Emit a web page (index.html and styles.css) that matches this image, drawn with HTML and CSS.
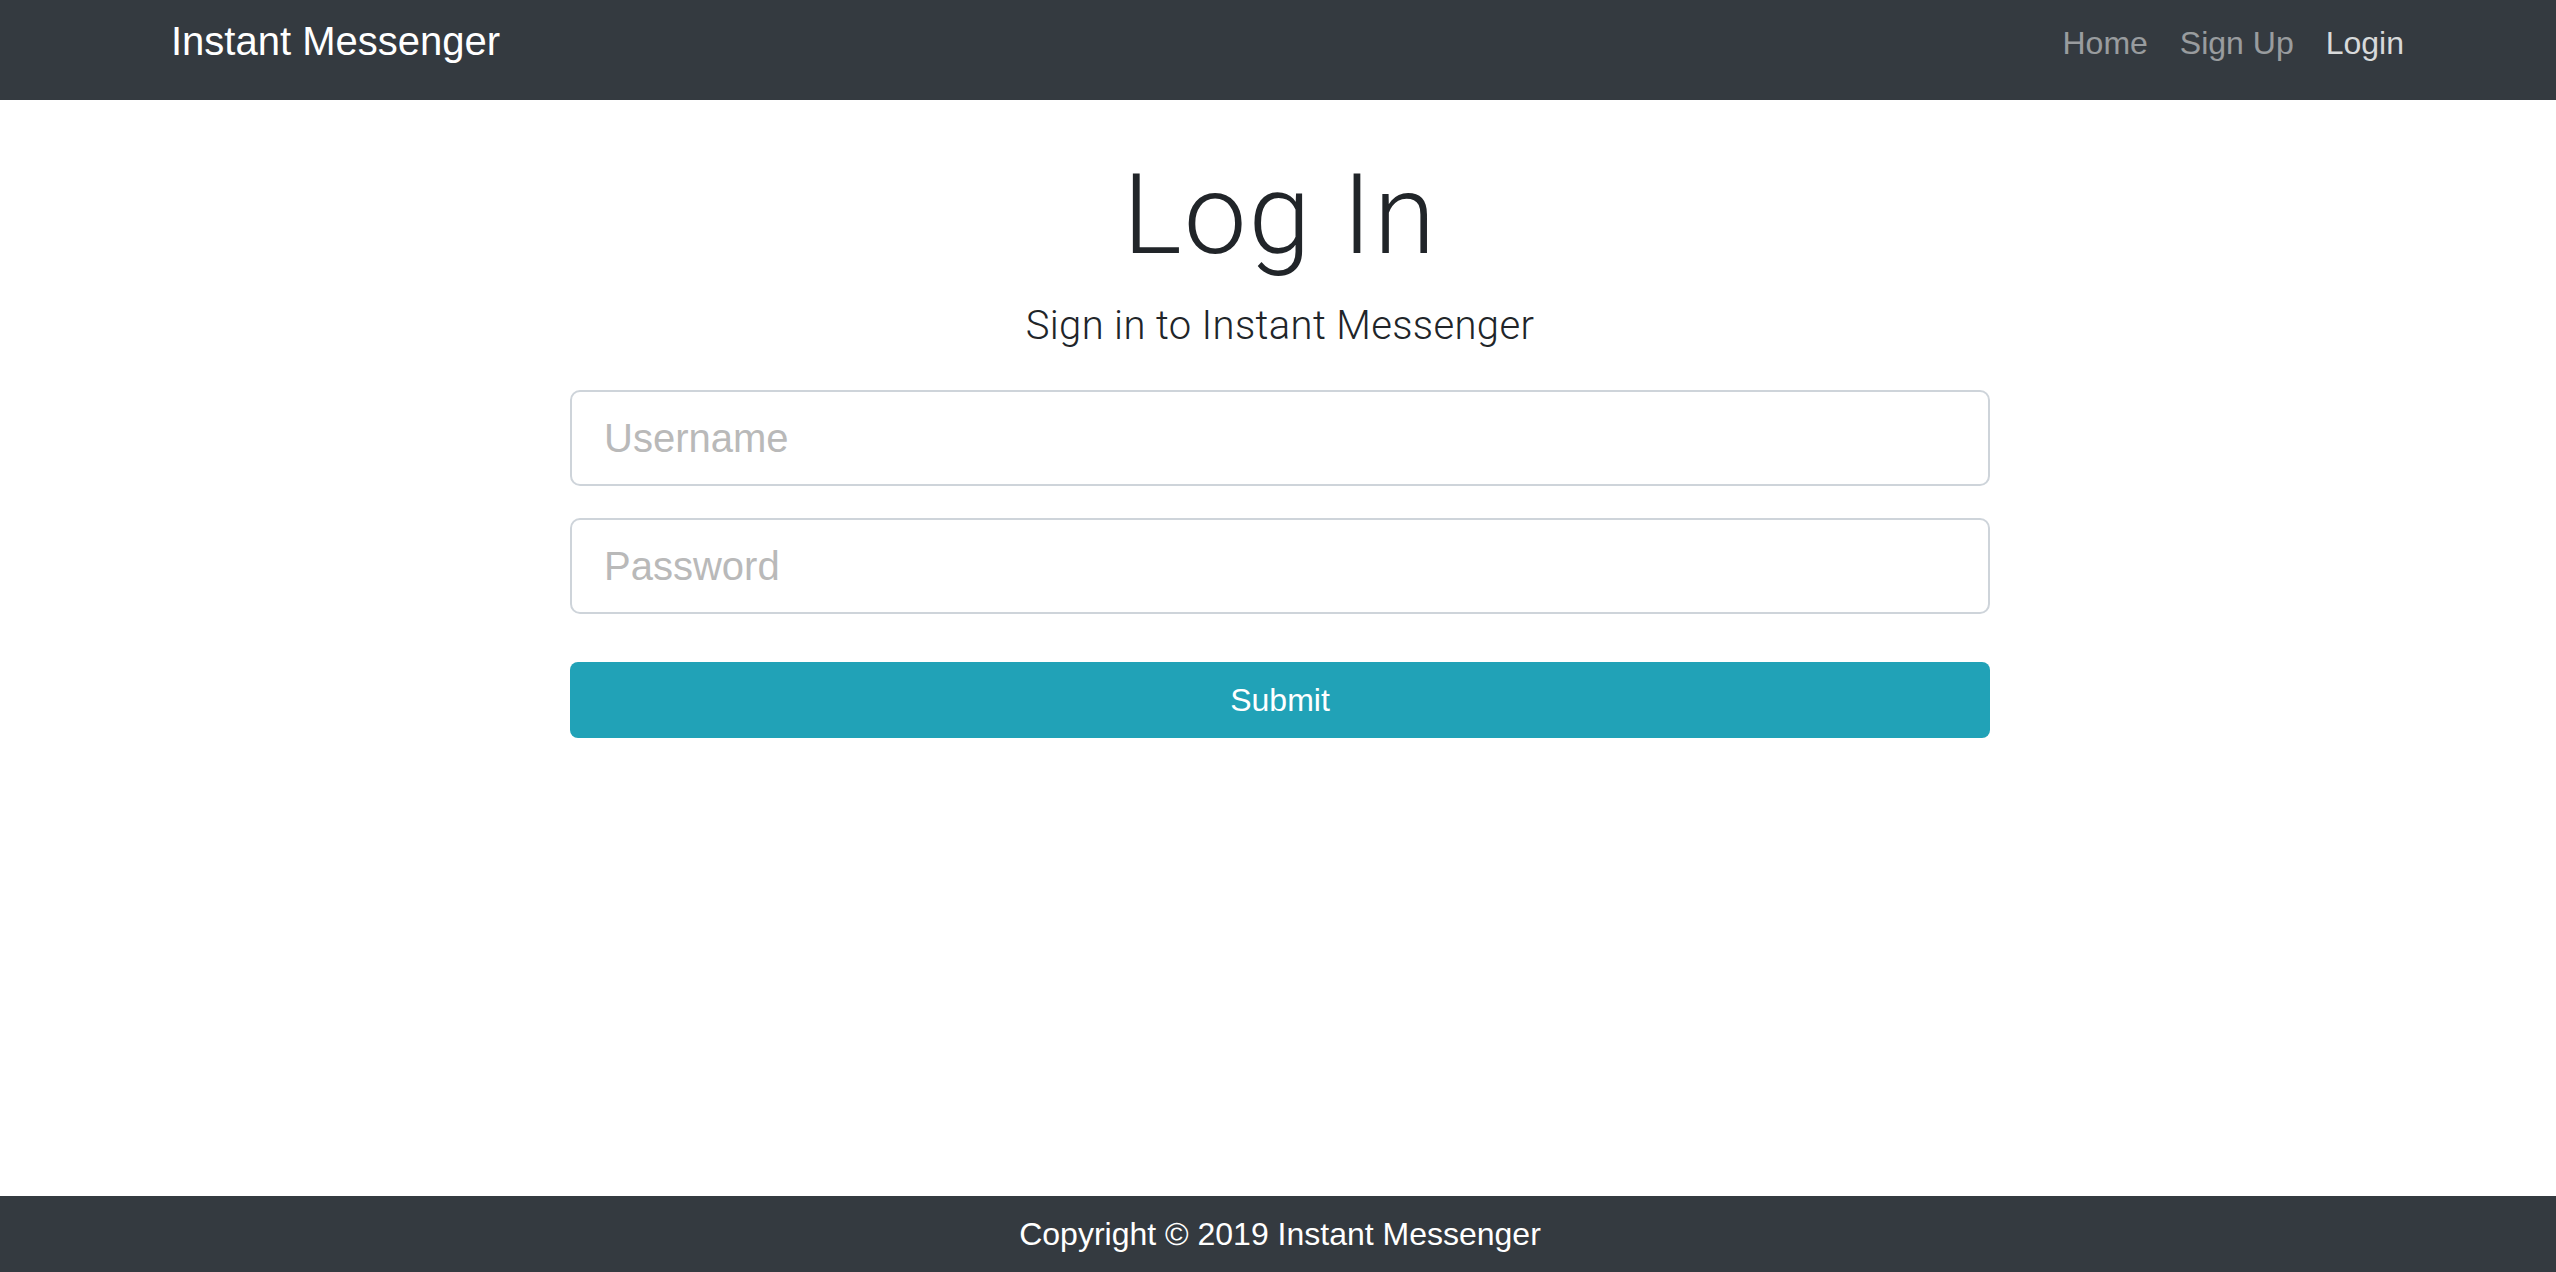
FILE: index.html
```html
<!DOCTYPE html>
<html lang="en">
<head>
<meta charset="utf-8">
<title>Log In - Instant Messenger</title>
<link rel="stylesheet" href="styles.css">
</head>
<body>
<header class="navbar">
  <div class="navbar-inner">
    <a class="brand" href="#">Instant Messenger</a>
    <nav class="nav">
      <a class="nav-link" href="#">Home</a>
      <a class="nav-link" href="#">Sign Up</a>
      <a class="nav-link active" href="#">Login</a>
    </nav>
  </div>
</header>
<main class="main">
  <h1 class="title">Log In</h1>
  <p class="lead">Sign in to Instant Messenger</p>
  <form class="login-form">
    <input class="field" type="text" placeholder="Username">
    <input class="field" type="password" placeholder="Password">
    <button class="submit" type="button">Submit</button>
  </form>
</main>
<footer class="footer">
  <p class="footer-text">Copyright © 2019 Instant Messenger</p>
</footer>
</body>
</html>
```
FILE: styles.css
```css
* { box-sizing: border-box; }
html, body { height: 100%; }
body {
  margin: 0;
  min-height: 100vh;
  display: flex;
  flex-direction: column;
  font-family: "Liberation Sans", Arial, sans-serif;
  color: #212529;
  background: #fff;
}
a { text-decoration: none; }

.navbar {
  background: #343a40;
  height: 100px;
  flex: none;
}
.navbar-inner {
  display: flex;
  justify-content: space-between;
  align-items: flex-start;
  padding: 0 136px 0 171px;
  height: 100%;
}
.brand {
  color: #fff;
  font-size: 40px;
  line-height: 60px;
  margin-top: 11px;
}
.nav {
  display: flex;
  margin-top: 19px;
}
.nav-link {
  color: rgba(255, 255, 255, 0.5);
  font-size: 32px;
  line-height: 48px;
  padding: 0 16px;
}
.nav-link.active { color: rgba(255, 255, 255, 0.82); }

.main {
  flex: 1 0 auto;
  display: flex;
  flex-direction: column;
  align-items: center;
  padding: 48px 0 0 4px;
}
.title {
  margin: 0 0 14px;
  font-family: Roboto, "Liberation Sans", sans-serif;
  font-weight: 300;
  font-size: 112px;
  line-height: 134px;
  letter-spacing: 2px;
  color: #212529;
}
.lead {
  margin: 0;
  font-family: Roboto, "Liberation Sans", sans-serif;
  font-weight: 300;
  font-size: 40px;
  line-height: 60px;
  letter-spacing: 0.35px;
  color: #212529;
}
.login-form {
  width: 1420px;
  margin-top: 34px;
  display: flex;
  flex-direction: column;
}
.field {
  height: 96px;
  border: 2px solid #ced4da;
  border-radius: 10px;
  padding: 0 32px;
  font-family: "Liberation Sans", Arial, sans-serif;
  font-size: 40px;
  color: #495057;
  background: #fff;
  margin: 0 0 32px;
  outline: none;
}
.field::placeholder { color: #b9b9b9; }
.submit {
  margin-top: 16px;
  height: 76px;
  border: none;
  border-radius: 8px;
  background: #21a2b7;
  color: #fff;
  font-family: "Liberation Sans", Arial, sans-serif;
  font-size: 32px;
}

.footer {
  flex: none;
  background: #343a40;
  height: 76px;
  padding: 14px 0 14px 4px;
}
.footer-text {
  margin: 0;
  text-align: center;
  color: #fff;
  font-size: 32px;
  line-height: 48px;
}
```
